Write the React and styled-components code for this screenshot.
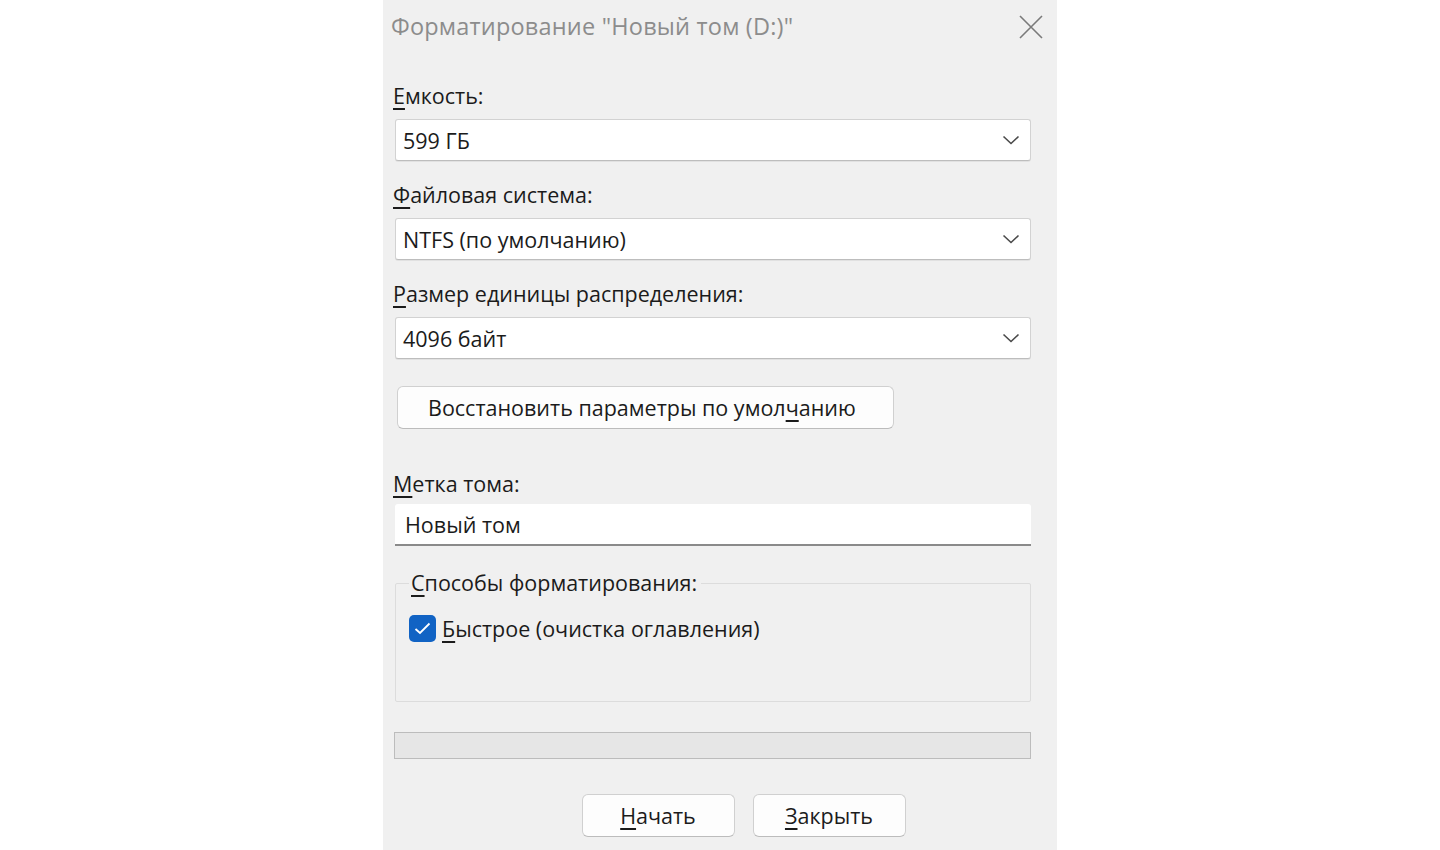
import React from 'react';
import styled, { createGlobalStyle } from 'styled-components';

const GlobalStyle = createGlobalStyle`
  html, body {
    margin: 0;
    padding: 0;
    background: #ffffff;
  }
  body {
    font-family: "Open Sans", "Noto Sans", "Liberation Sans", sans-serif;
    color: #1b1b1b;
  }
`;

const Dialog = styled.div`
  width: 674px;
  height: 850px;
  margin: 0 auto;
  background: #f0f0f0;
  box-sizing: border-box;
  padding: 0 26px 0 12px;
  display: flex;
  flex-direction: column;
`;

const TitleBar = styled.div`
  height: 54px;
  display: flex;
  align-items: center;
  justify-content: space-between;
  margin: 0 -26px 0 -4px;
  padding: 0 12px 0 0;
`;

const Title = styled.div`
  font-size: 23.5px;
  color: #8c8c8c;
  letter-spacing: 0.2px;
  margin-top: -2px;
`;

const CloseButton = styled.button`
  width: 28px;
  height: 28px;
  border: none;
  background: transparent;
  padding: 0;
  display: flex;
  align-items: center;
  justify-content: center;
`;

const Field = styled.div`
  display: flex;
  flex-direction: column;
  gap: ${(p) => p.$gap || 9}px;
  margin-top: ${(p) => p.$top || 0}px;
`;

const Label = styled.div`
  font-size: 21.5px;
  line-height: 28px;
  height: 28px;
  margin-left: -2px;
`;

const Key = styled.span`
  text-decoration: underline;
  text-decoration-thickness: 2px;
  text-underline-offset: 4px;
`;

const Select = styled.div`
  height: 42px;
  box-sizing: border-box;
  background: #ffffff;
  border: 1px solid #d2d2d2;
  border-bottom-color: #bdbdbd;
  border-radius: 3px;
  box-shadow: 0 1px 0 rgba(0, 0, 0, 0.06);
  display: flex;
  align-items: center;
  justify-content: space-between;
  padding: 0 10px 0 7px;
  font-size: 21.5px;
`;

const ResetButton = styled.button`
  align-self: flex-start;
  margin: 27px 0 0 2px;
  width: 497px;
  height: 43px;
  box-sizing: border-box;
  background: #fdfdfd;
  border: 1px solid #d0d0d0;
  border-bottom-color: #bcbcbc;
  border-radius: 6px;
  font-family: inherit;
  font-size: 21.5px;
  color: #1b1b1b;
  text-align: left;
  padding: 0 0 0 30px;
`;

const TextInput = styled.div`
  height: 42px;
  box-sizing: border-box;
  background: #ffffff;
  border-radius: 3px 3px 0 0;
  border-bottom: 2px solid #8a8a8a;
  display: flex;
  align-items: center;
  padding: 0 10px;
  font-size: 21.5px;
`;

const GroupBox = styled.fieldset`
  margin: 23px 0 0 0;
  padding: 17px 0 0 13px;
  height: 133px;
  box-sizing: border-box;
  border: 1px solid #dcdcdc;
  border-radius: 2px;
  min-width: 0;
`;

const Legend = styled.legend`
  font-size: 21.5px;
  line-height: 28px;
  padding: 0 4px 0 2px;
  margin-left: 0;
`;

const CheckRow = styled.label`
  display: flex;
  align-items: center;
  gap: 6px;
  font-size: 21.5px;
`;

const CheckBox = styled.span`
  width: 27px;
  height: 27px;
  border-radius: 5px;
  background: #1163c4;
  display: flex;
  align-items: center;
  justify-content: center;
`;

const Progress = styled.div`
  margin: 30px 0 0 -1px;
  height: 27px;
  box-sizing: border-box;
  background: #e6e6e6;
  border: 1px solid #bcbcbc;
`;

const Footer = styled.div`
  display: flex;
  justify-content: center;
  gap: 18px;
  margin: 35px 0 0 0;
  padding-left: 61px;
`;

const FooterButton = styled.button`
  width: 153px;
  height: 43px;
  box-sizing: border-box;
  background: #fdfdfd;
  border: 1px solid #d0d0d0;
  border-bottom-color: #bcbcbc;
  border-radius: 6px;
  font-family: inherit;
  font-size: 21.5px;
  color: #1b1b1b;
`;

const Chevron = () => (
  <svg width="18" height="10" viewBox="0 0 18 10" fill="none">
    <path d="M1.5 1.5 L9 8.5 L16.5 1.5" stroke="#4a4a4a" strokeWidth="1.6" />
  </svg>
);

const CloseIcon = () => (
  <svg width="24" height="24" viewBox="0 0 24 24" fill="none">
    <path d="M1 1 L23 23 M23 1 L1 23" stroke="#7a7a7a" strokeWidth="1.6" />
  </svg>
);

const CheckMark = () => (
  <svg width="17" height="13" viewBox="0 0 17 13" fill="none">
    <path d="M1.5 7 L6 11 L15.5 1.5" stroke="#ffffff" strokeWidth="1.8" />
  </svg>
);

const SelectField = ({ top, label, value }) => (
  <Field $top={top}>
    <Label>{label}</Label>
    <Select>
      <span>{value}</span>
      <Chevron />
    </Select>
  </Field>
);

export default function App() {
  return (
    <>
      <GlobalStyle />
      <Dialog>
        <TitleBar>
          <Title>Форматирование "Новый том (D:)"</Title>
          <CloseButton aria-label="Закрыть">
            <CloseIcon />
          </CloseButton>
        </TitleBar>

        <SelectField top={28} label={<><Key>Е</Key>мкость:</>} value="599 ГБ" />
        <SelectField top={20} label={<><Key>Ф</Key>айловая система:</>} value="NTFS (по умолчанию)" />
        <SelectField top={20} label={<><Key>Р</Key>азмер единицы распределения:</>} value="4096 байт" />

        <ResetButton>
          Восстановить параметры по умол<Key>ч</Key>анию
        </ResetButton>

        <Field $top={41} $gap={6}>
          <Label><Key>М</Key>етка тома:</Label>
          <TextInput>Новый том</TextInput>
        </Field>

        <GroupBox>
          <Legend><Key>С</Key>пособы форматирования:</Legend>
          <CheckRow>
            <CheckBox>
              <CheckMark />
            </CheckBox>
            <span><Key>Б</Key>ыстрое (очистка оглавления)</span>
          </CheckRow>
        </GroupBox>

        <Progress />

        <Footer>
          <FooterButton><Key>Н</Key>ачать</FooterButton>
          <FooterButton><Key>З</Key>акрыть</FooterButton>
        </Footer>
      </Dialog>
    </>
  );
}
